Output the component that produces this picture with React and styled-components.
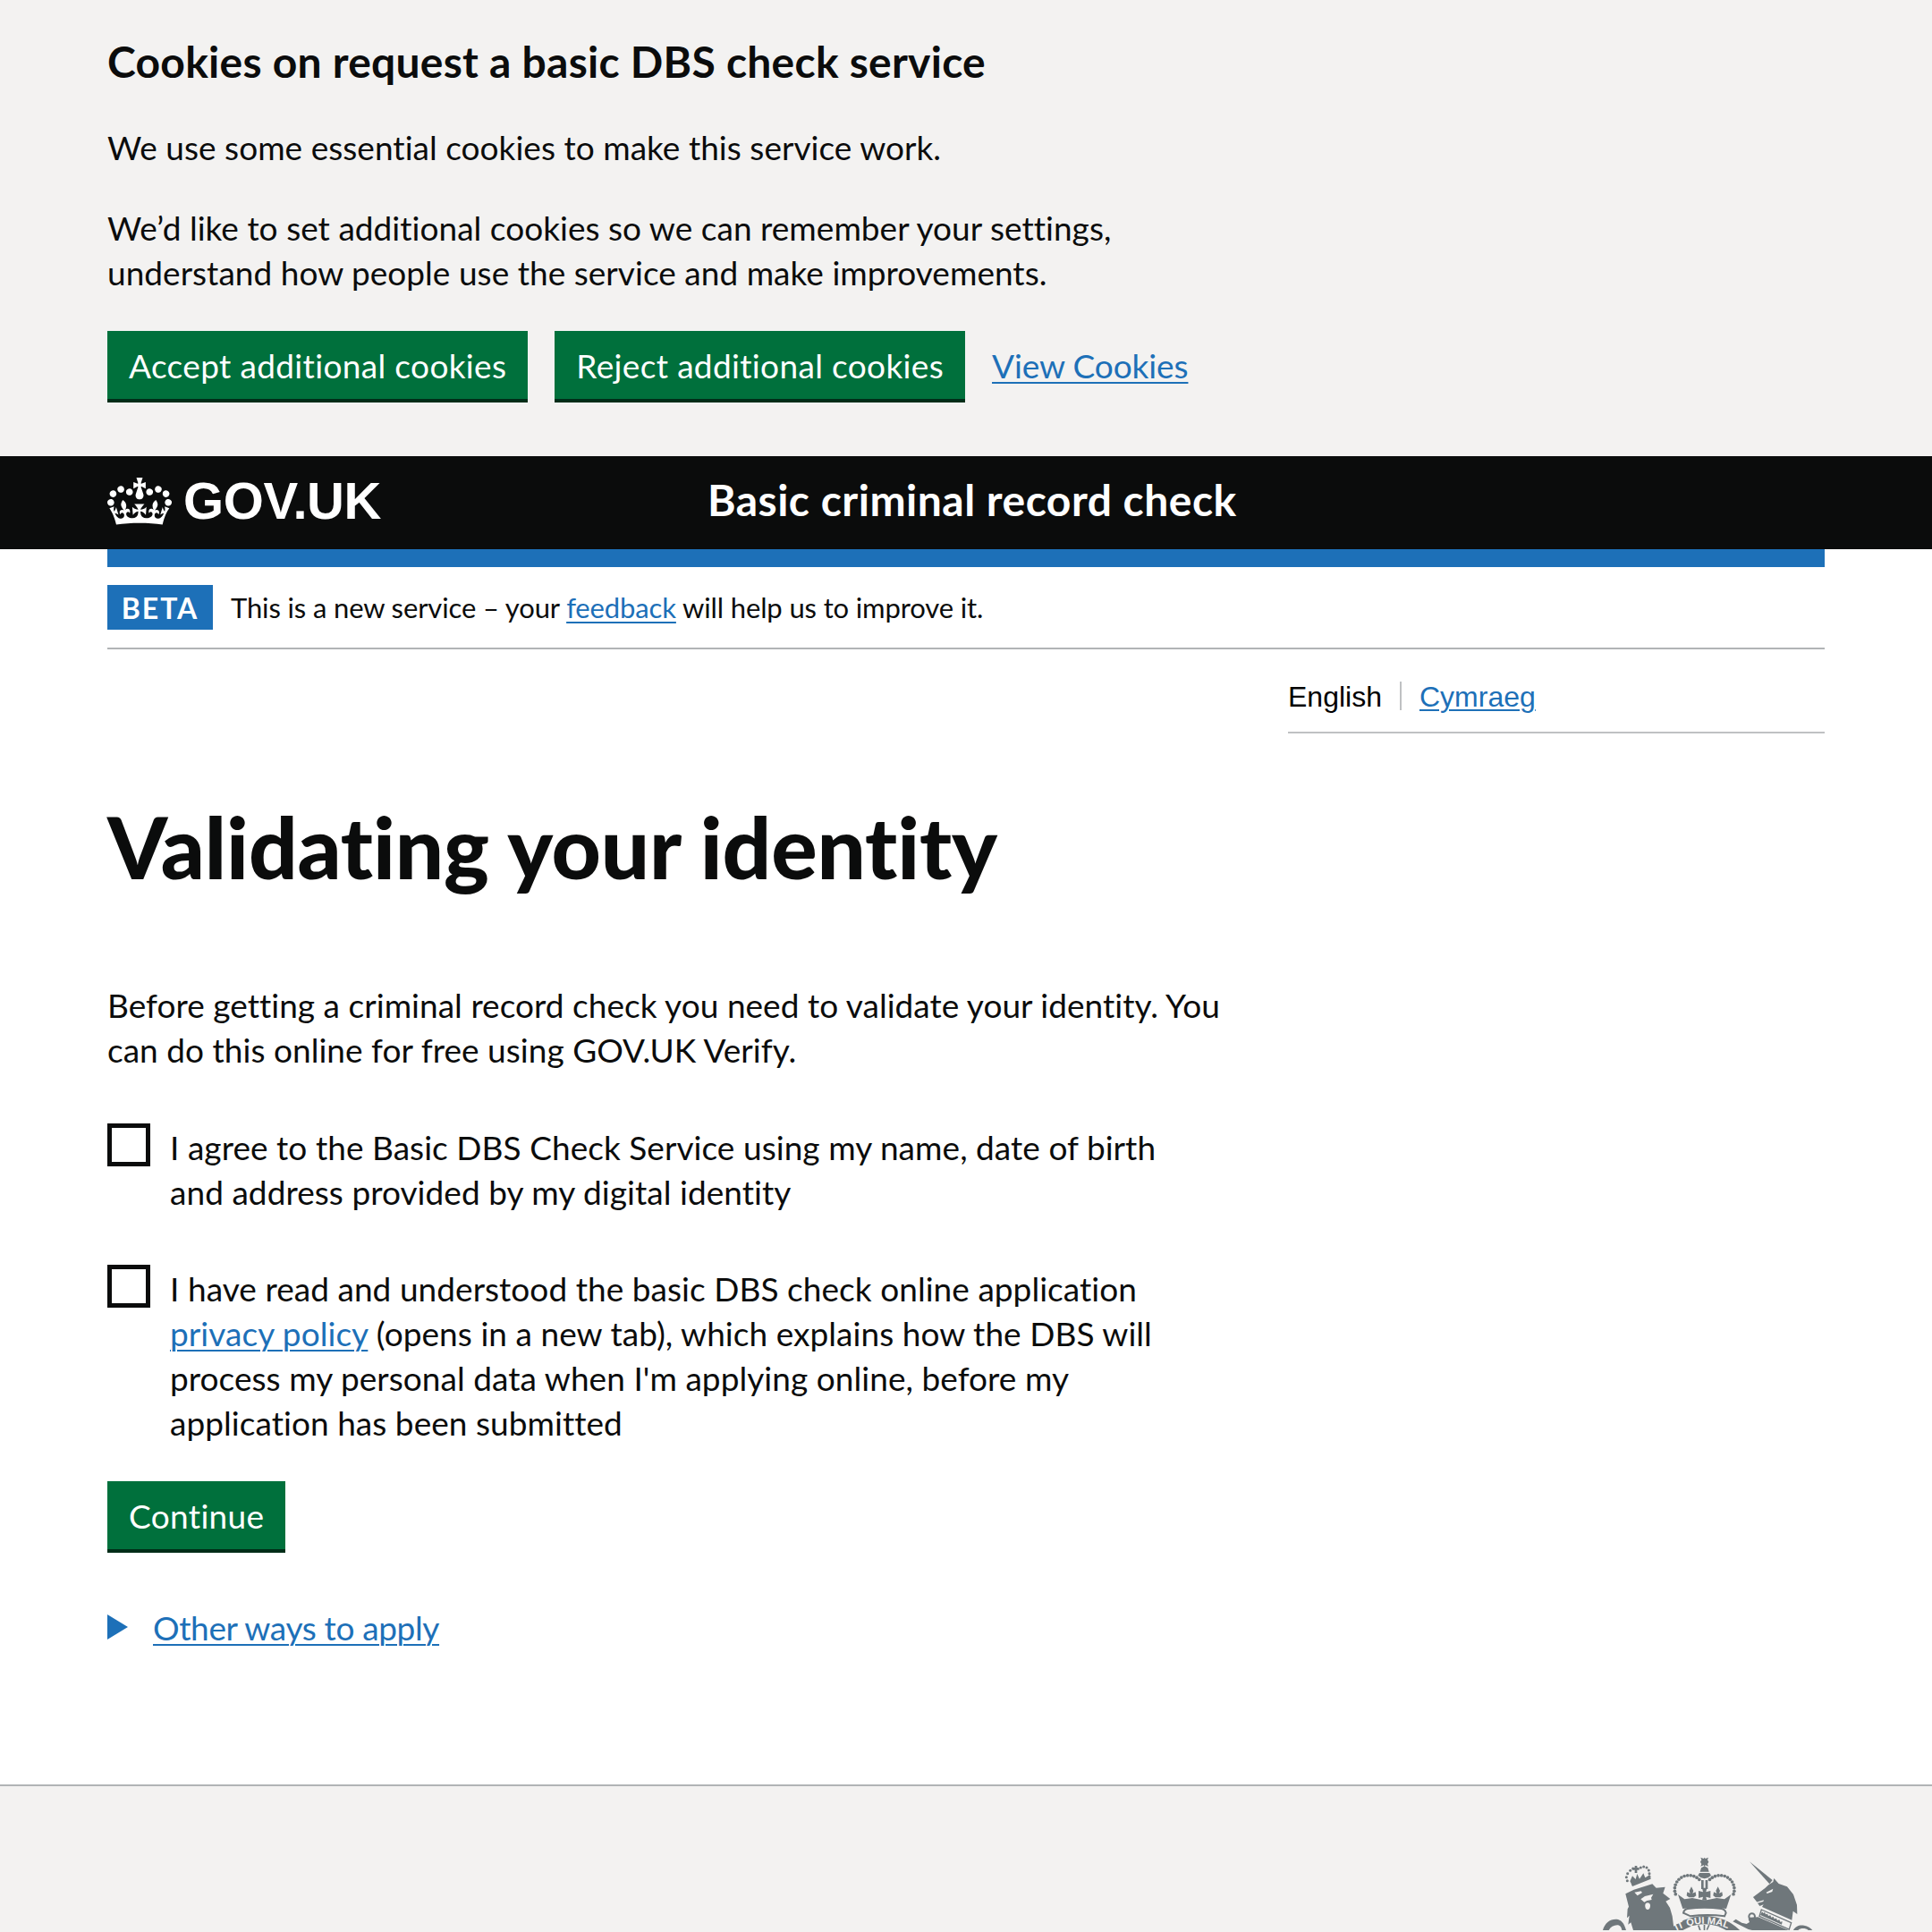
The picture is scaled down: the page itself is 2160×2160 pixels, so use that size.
import styled, { createGlobalStyle } from 'styled-components';

const GlobalStyle = createGlobalStyle`
	html, body {
		margin: 0;
		padding: 0;
		height: 2160px;
		overflow: hidden;
		background: white;
		color: #0b0c0c;
		font-family: Lato, "Noto Sans", sans-serif;
		font-variant-ligatures: none;
	}
	* {
		box-sizing: border-box;
	}
`;

const Link = styled.a`
	color: #1d70b8;
	text-decoration: underline;
	text-decoration-thickness: 2px;
	text-underline-offset: 4px;
`;

const Wrap = styled.div`
	width: 1920px;
	margin: 0 auto;
`;

const CookieBanner = styled.section`
	background: #f3f2f1;
	padding: 40px 0 60px;
	height: 510px;
`;

const CookieTitle = styled.h2`
	margin: 0 0 42px;
	font-size: 48px;
	line-height: 58px;
	font-weight: 700;
	letter-spacing: 0.25px;
`;

const BodyText = styled.p`
	margin: 0 0 ${(props) => props.$after || 40}px;
	font-size: 37px;
	line-height: 50px;
	letter-spacing: 0.03px;
	width: 1280px;
`;

const ButtonRow = styled.div`
	display: flex;
	align-items: center;
	gap: 30px;
	a {
		font-size: 37px;
		line-height: 50px;
		letter-spacing: -0.1px;
		margin-top: -2px;
	}
`;

const GreenButton = styled.button`
	display: block;
	height: 76px;
	margin: 0 0 4px;
	padding: 0 24px;
	border: 0;
	background: #00703c;
	box-shadow: 0 4px 0 #002d18;
	color: white;
	font-family: inherit;
	font-size: 37px;
	font-variant-ligatures: none;
	letter-spacing: 0.35px;
`;

const Header = styled.header`
	background: #0b0c0c;
	height: 104px;
	color: white;
`;

const HeaderInner = styled(Wrap)`
	display: flex;
	align-items: center;
	height: 100%;
`;

const Logo = styled.div`
	display: flex;
	align-items: center;
	gap: 13px;
	width: 671px;
	padding-bottom: 5px;
	font-family: 'Liberation Sans', Arial, sans-serif;
	font-size: 58px;
	font-weight: 700;
	letter-spacing: -0.4px;
	svg {
		display: block;
		width: 72px;
		height: 53px;
		margin-top: 1px;
	}
`;

const ServiceName = styled.div`
	padding-bottom: 7px;
	font-size: 48px;
	font-weight: 700;
	letter-spacing: 0.5px;
`;

const BlueBar = styled.div`
	height: 20px;
	background: #1d70b8;
`;

const PhaseBanner = styled.div`
	display: flex;
	align-items: center;
	gap: 20px;
	height: 92px;
	border-bottom: 2px solid #b1b4b6;
	font-size: 31px;
	letter-spacing: -0.13px;
`;

const PhaseTag = styled.strong`
	display: flex;
	align-items: center;
	justify-content: center;
	width: 118px;
	height: 50px;
	background: #1d70b8;
	color: white;
	font-size: 32px;
	font-weight: 700;
	letter-spacing: 2px;
`;

const LanguageRow = styled.div`
	display: flex;
	justify-content: flex-end;
`;

const LanguageList = styled.div`
	display: flex;
	align-items: center;
	width: 600px;
	height: 94px;
	padding-top: 15px;
	border-bottom: 2px solid #bfc1c3;
	font-family: 'Liberation Sans', Arial, sans-serif;
	font-size: 32px;
	color: #000;
	a {
		text-underline-offset: 3px;
	}
`;

const LanguageDivider = styled.span`
	width: 2px;
	height: 32px;
	margin: -4px 20px 0;
	background: #bfc1c3;
`;

const Title = styled.h1`
	margin: 76px 0 103px;
	font-size: 96px;
	line-height: 100px;
	font-weight: 900;
	letter-spacing: -0.15px;
`;

const CheckRow = styled.label`
	display: flex;
	gap: 22px;
	width: 1280px;
	margin-bottom: ${(props) => props.$after}px;
`;

const CheckBox = styled.input.attrs({ type: 'checkbox' })`
	appearance: none;
	flex: none;
	width: 48px;
	height: 48px;
	margin: -2px 0 0;
	border: 5px solid #0b0c0c;
	background: white;
`;

const CheckText = styled.span`
	width: 1130px;
	font-size: 37px;
	line-height: 50px;
	letter-spacing: 0.05px;
`;

const Details = styled.div`
	display: flex;
	align-items: center;
	gap: 28px;
	margin-top: 62px;
	height: 50px;
	font-size: 37px;
	letter-spacing: -0.35px;
`;

const Triangle = styled.span`
	width: 0;
	height: 0;
	border-style: solid;
	border-width: 14px 0 14px 23px;
	border-color: transparent transparent transparent #1d70b8;
`;

const Footer = styled.footer`
	margin-top: 151px;
	padding-top: 41px;
	height: 300px;
	background: #f3f2f1;
	border-top: 2px solid #b1b4b6;
`;

const FooterInner = styled(Wrap)`
	display: flex;
	justify-content: flex-end;
	svg {
		display: block;
		width: 280px;
		height: 120px;
	}
`;

const crown =
	'M25 30.2c3.5 1.5 7.7-.2 9.1-3.7 1.5-3.6-.2-7.8-3.9-9.2-3.6-1.4-7.6.3-9.1 3.9-1.4 3.5.3 7.5 3.9 9zM9 39.5c3.6 1.5 7.8-.2 9.2-3.7 1.5-3.6-.2-7.8-3.9-9.1-3.6-1.5-7.6.2-9.1 3.8-1.4 3.5.3 7.5 3.8 9zM4.4 57.2c3.5 1.5 7.7-.2 9.1-3.8 1.5-3.6-.2-7.7-3.9-9.1-3.5-1.5-7.6.3-9.1 3.8-1.4 3.5.3 7.6 3.9 9.1zm38.3-21.4c3.5 1.5 7.7-.2 9.1-3.8 1.5-3.6-.2-7.7-3.9-9.1-3.6-1.5-7.6.3-9.1 3.8-1.3 3.6.4 7.7 3.9 9.1zm64.4-5.6c-3.6 1.5-7.8-.2-9.1-3.7-1.5-3.6.2-7.8 3.8-9.2 3.6-1.4 7.7.3 9.2 3.9 1.3 3.5-.4 7.5-3.9 9zm15.9 9.3c-3.6 1.5-7.7-.2-9.1-3.7-1.5-3.6.2-7.8 3.7-9.1 3.6-1.5 7.7.2 9.2 3.8 1.5 3.5-.3 7.5-3.8 9zm4.7 17.7c-3.6 1.5-7.8-.2-9.2-3.8-1.5-3.6.2-7.7 3.9-9.1 3.6-1.5 7.7.3 9.2 3.8 1.3 3.5-.4 7.6-3.9 9.1zM89.3 35.8c-3.6 1.5-7.8-.2-9.2-3.8-1.4-3.6.2-7.7 3.9-9.1 3.6-1.5 7.7.3 9.2 3.8 1.4 3.6-.3 7.7-3.9 9.1zM69.7 17.7l8.9 4.7V9.3l-8.9 2.8c-.2-.3-.5-.6-.9-.9L72.4 0H59.6l3.6 11.2c-.3.3-.6.5-.9.9l-8.8-2.8v13.1l8.8-4.7c.3.3.6.7.9.9l-5 15.4v.1c-.2.8-.4 1.6-.4 2.4 0 4.1 3.1 7.5 7 8.1h.2c.3 0 .7.1 1 .1.4 0 .7 0 1-.1h.2c4-.6 7.1-4.1 7.1-8.1 0-.8-.1-1.7-.4-2.4V34l-5.1-15.4c.4-.2.7-.6 1-.9zM66 92.8c16.9 0 32.8 1.1 47.1 3.2 4-16.9 8.9-26.7 14-33.5l-9.6-3.4c1 4.9 1.1 7.2 0 10.2-1.5-1.4-3-4.3-4.2-8.7L108.6 76c2.8-2 5-3.2 7.5-3.3-4.4 9.4-10 11.9-13.6 11.2-4.3-.8-6.3-4.6-5.6-7.9 1-4.7 5.7-5.9 8-.5 4.3-8.7-3-11.4-7.6-8.8 7.1-7.2 7.9-13.5 2.1-21.1-8 6.1-8.1 12.3-4.5 20.8-4.7-5.4-12.1-2.5-9.5 6.2 3.4-5.2 7.9-2 7.2 3.1-.6 4.3-6.4 7.8-13.5 7.2-10.3-.9-10.9-8-11.2-13.8 2.5-.5 7.1 1.8 11 7.3L80.2 60c-4.1 4.4-8 5.3-12.3 5.4 1.4-4.4 8-11.6 8-11.6H55.5s6.4 7.2 7.9 11.6c-4.2-.1-8-1-12.3-5.4l1.4 16.4c3.9-5.5 8.5-7.7 10.9-7.3-.3 5.8-.9 12.8-11.1 13.8-7.2.6-12.9-2.9-13.5-7.2-.7-5 3.8-8.3 7.1-3.1 2.7-8.7-4.6-11.6-9.4-6.2 3.7-8.5 3.6-14.7-4.6-20.8-5.8 7.6-5 13.9 2.2 21.1-4.7-2.6-11.9.1-7.7 8.8 2.3-5.5 7.1-4.2 8.1.5.7 3.3-1.3 7.1-5.7 7.9-3.5.7-9-1.8-13.5-11.2 2.5.1 4.7 1.3 7.5 3.3l-4.7-15.4c-1.2 4.4-2.7 7.2-4.3 8.7-1.1-3-.9-5.3 0-10.2l-9.5 3.4c5 6.9 9.9 16.7 14 33.5 14.8-2.1 30.8-3.2 47.7-3.2z';

// the arms are drawn in coordinates of a 3x crop, the groups scale them back
const archDots = [];
for (let angle = 200; angle >= 40; angle -= 13) {
	const rad = (angle * Math.PI) / 180;
	const x = 55 + 48 * Math.cos(rad);
	const y = 133 - 47 * Math.sin(rad);
	archDots.push([x, y], [214 - x, y]);
}

const lionDots = [
	[118, 104], [115, 92], [119, 80], [128, 70], [137, 63], [163, 60], [173, 57], [183, 60], [190, 69], [192, 80], [192, 90],
];

const fleur = 'M0-22L7-8 4 0 14-4 16 8 8 14H-8L-16 8-14-4-4 0-7-8z';

function RoyalArms() {
	return (
		<svg viewBox="1760 2040 280 120" fill="#6f777b">
			<g transform="translate(1780 2070) scale(0.3333)">
				{lionDots.map(([x, y]) => (
					<circle key={`${x}-${y}`} cx={x} cy={y} r="4.5" />
				))}
				<path d="M143 54h8v6h7v8h-7v10h-8V68h-7v-8h7z" />
				<path d="M127 106l8-18 11 11 5-18 8 17 13-19 6 15 15-9 2 12-60 23z" />
				<path d="M131 113l64-24 2 9-62 25z" />
				<path d="M112 148l28-14 62-19 13 13 30-3-7 21 24 19-15 8 14 22 8 28 6 47H138l-8-26-9 7 4-30-8 8 2-30 4-8z" />
				<path d="M36 270c6-24 24-38 46-37 14 1 26 12 32 37H100c-2-12-8-17-16-17-12 0-22 7-28 17z" />
				<path
					fill="#f3f2f1"
					d="M142 143l22-4 4 5-16 10zM163 166l14-10 28-7-7 12 2 7-16 3-9 5zM180 180c6-4 14-2 15 6 1 9-4 15-9 15-7 0-11-14-6-21z"
				/>
			</g>
			<g transform="translate(1870 2070) scale(0.3333)">
				{archDots.map(([x, y]) => (
					<circle key={`${x}-${y}`} cx={x} cy={y} r="5.5" />
				))}
				<path d="M94 26l10 4 3-4 3 4 10-4-3 8 4 7-4 7 3 8-10-4-3 4-3-4-10 4 3-8-4-7 4-7z" />
				<path d="M107 55l11 6 4 13h-30l4-13zM90 78h34l5 8-10 8-12 3-12-3-10-8z" />
				<path d="M96 102h8v30h-8zM110 102h8v30h-8z" />
				<path d={fleur} transform="translate(63 146)" />
				<path d={fleur} transform="translate(152 146)" />
				<path d="M99 128h16l-3 14 15-4v24l-15-4 3 12H99l3-12-15 4v-24l15 4z" />
				<path d="M18 150l22 16 26-4 41 8 41-8 26 4 22-16-16 48c-48-6-98-6-146 0z" />
				<circle cx="107" cy="392" r="170" />
				<circle cx="107" cy="392" r="142" fill="#f3f2f1" />
				<path d="M104 252h5v18h-5zM120 252l5 1-8 17-4-2zM84 254l5-1 6 17-5 1z" />
				<path
					fill="#f3f2f1"
					stroke="#6f777b"
					strokeWidth="6"
					d="M36 212c2-9 8-13 14-14 38-5 76-5 114 0 8 1 13 6 15 14l-5 11c-38-5-76-5-114 0z"
				/>
				<path id="garter" fill="none" d="M-43 316A200 200 0 0 1 257 316" />
				<text fontFamily="'Liberation Sans', sans-serif" fontWeight="700" fontSize="33" fill="#f3f2f1">
					<textPath href="#garter" startOffset="72">IT QUI MAL</textPath>
				</text>
				<path d="M258 40l77 62-10 13z" />
				<path d="M322 118l15-10 3-12 16 18 28 10 21 26 12 35 1 31-14-10-4 30-100-44 5-8-13 5-12-17-10-13 20-15 20-15z" />
				<path fill="#f3f2f1" d="M314 143l23-12-3 10-17 6z" />
				<path d="M280 176l26-7-2 5-22 6z" fill="#f3f2f1" />
				<path fill="#f3f2f1" stroke="#6f777b" strokeWidth="4" d="M298 201l100 44-7 22-100-44z" />
				<path d="M300 208l5 5 4-4 3 8 6-2 3 7 7-2 3 7 7-2 3 7 7-2 3 7 7-2 3 7 7-1-2 10-72-32z" />
				<path d="M287 226l102 44H274c-10 0-18-2-26-6l-46-23 10-8 20 12 16 4 10-6-4-10 5-6z" />
				<circle cx="266" cy="224" r="10" fill="none" stroke="#6f777b" strokeWidth="6" />
				<path d="M405 270c6-14 22-19 36-16 13 2 22 8 28 16h-14c-8-7-26-8-34 0z" />
			</g>
		</svg>
	);
}

export default function App() {
	return (
		<>
			<GlobalStyle />
			<CookieBanner>
				<Wrap>
					<CookieTitle>Cookies on request a basic DBS check service</CookieTitle>
					<BodyText>We use some essential cookies to make this service work.</BodyText>
					<BodyText>
						We’d like to set additional cookies so we can remember your settings, understand how people use the service
						and make improvements.
					</BodyText>
					<ButtonRow>
						<GreenButton>Accept additional cookies</GreenButton>
						<GreenButton>Reject additional cookies</GreenButton>
						<Link href="#">View Cookies</Link>
					</ButtonRow>
				</Wrap>
			</CookieBanner>
			<Header>
				<HeaderInner>
					<Logo>
						<svg viewBox="0 0 132 97">
							<path fill="currentColor" fillRule="evenodd" d={crown} />
						</svg>
						GOV.UK
					</Logo>
					<ServiceName>Basic criminal record check</ServiceName>
				</HeaderInner>
			</Header>
			<Wrap>
				<BlueBar />
				<PhaseBanner>
					<PhaseTag>BETA</PhaseTag>
					<span>
						This is a new service – your <Link href="#">feedback</Link> will help us to improve it.
					</span>
				</PhaseBanner>
				<LanguageRow>
					<LanguageList>
						English
						<LanguageDivider />
						<Link href="#">Cymraeg</Link>
					</LanguageList>
				</LanguageRow>
				<Title>Validating your identity</Title>
				<BodyText $after={59}>
					Before getting a criminal record check you need to validate your identity. You can do this online for free
					using GOV.UK Verify.
				</BodyText>
				<CheckRow $after={58}>
					<CheckBox />
					<CheckText>
						I agree to the Basic DBS Check Service using my name, date of birth and address provided by my digital
						identity
					</CheckText>
				</CheckRow>
				<CheckRow $after={40}>
					<CheckBox />
					<CheckText>
						I have read and understood the basic DBS check online application <Link href="#">privacy policy</Link> (opens
						in a new tab), which explains how the DBS will process my personal data when I'm applying online, before my
						application has been submitted
					</CheckText>
				</CheckRow>
				<GreenButton>Continue</GreenButton>
				<Details>
					<Triangle />
					<Link href="#">Other ways to apply</Link>
				</Details>
			</Wrap>
			<Footer>
				<FooterInner>
					<RoyalArms />
				</FooterInner>
			</Footer>
		</>
	);
}
